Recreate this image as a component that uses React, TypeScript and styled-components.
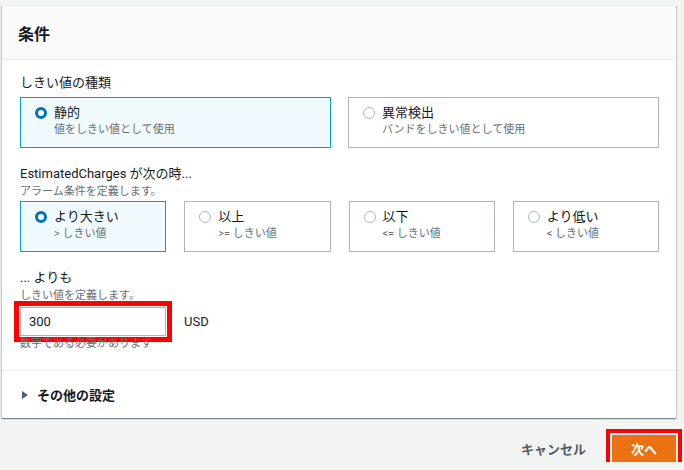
import React, { useState } from "react";
import styled, { createGlobalStyle } from "styled-components";

const GlobalStyle = createGlobalStyle`
  body {
    margin: 0;
    background: #f2f3f3;
    font-family: Roboto, "Noto Sans CJK JP", sans-serif;
    color: #16191f;
  }
  * { box-sizing: border-box; }
`;

const Page = styled.div`
  padding: 5px 8px 0 2px;
`;

const Card = styled.section`
  background: #ffffff;
  border-top: 1px solid #eaeded;
  box-shadow: 0 1px 1px 0 rgba(0, 28, 36, 0.3), 1px 1px 1px 0 rgba(0, 28, 36, 0.15),
    -1px 1px 1px 0 rgba(0, 28, 36, 0.15);
`;

const CardHeader = styled.header`
  height: 54px;
  display: flex;
  align-items: center;
  padding: 0 16px;
  background: #fafafa;
  border-bottom: 1px solid #eaeded;
`;

const Heading = styled.h2`
  margin: 0;
  font-size: 16px;
  font-weight: 700;
`;

const CardBody = styled.div`
  padding: 12px 17px 19px 18px;
  display: flex;
  flex-direction: column;
  gap: 15px;
`;

const Field = styled.div`
  display: flex;
  flex-direction: column;
`;

const Label = styled.div`
  font-size: 13px;
  line-height: 22px;
`;

const Description = styled.div`
  font-size: 11px;
  line-height: 13px;
  color: #687078;
`;

const TileGrid = styled.div<{ $cols: number }>`
  margin-top: 3px;
  display: grid;
  grid-template-columns: repeat(${(p) => p.$cols}, 1fr);
  gap: ${(p) => (p.$cols > 2 ? 18 : 17)}px;
`;

const Tile = styled.label<{ $selected: boolean }>`
  display: flex;
  align-items: flex-start;
  gap: 7px;
  height: 51px;
  padding: 6px 10px 10px 14px;
  border: 1px solid ${(p) => (p.$selected ? "#00a1c9" : "#aab7b8")};
  background: ${(p) => (p.$selected ? "#f1faff" : "#ffffff")};
  cursor: pointer;
`;

const Radio = styled.span<{ $checked: boolean }>`
  flex: none;
  width: 12px;
  height: 12px;
  margin-top: 3px;
  border-radius: 50%;
  background: #ffffff;
  border: ${(p) => (p.$checked ? "3.5px solid #0073bb" : "1px solid #aab7b8")};
`;

const TileText = styled.div`
  display: flex;
  flex-direction: column;
`;

const TileTitle = styled.span`
  font-size: 13px;
  line-height: 18px;
`;

const TileSub = styled.span`
  font-size: 11px;
  line-height: 16px;
  color: #687078;
`;

const InputRow = styled.div`
  margin-top: 5px;
  display: flex;
  align-items: center;
  gap: 18px;
`;

const NumberInput = styled.input`
  width: 146px;
  height: 29px;
  padding: 0 8px;
  border: 1px solid #aab7b8;
  font-family: Roboto, sans-serif;
  font-size: 13px;
  color: #16191f;
  outline: 5px solid #f00;
  outline-offset: 1px;
`;

const Unit = styled.span`
  font-size: 13px;
`;

const Hint = styled.div`
  margin-top: 1px;
  font-size: 11px;
  line-height: 14px;
  color: #687078;
`;

const Expander = styled.div`
  border-top: 1px solid #eaeded;
  height: 48px;
  display: flex;
  align-items: center;
  gap: 9px;
  padding-left: 20px;
  font-size: 13px;
  font-weight: 700;
  cursor: pointer;
`;

const Caret = styled.span`
  width: 0;
  height: 0;
  border-top: 4px solid transparent;
  border-bottom: 4px solid transparent;
  border-left: 6px solid #545b64;
`;

const Footer = styled.footer`
  display: flex;
  justify-content: flex-end;
  align-items: center;
  padding-top: 17px;
`;

const LinkButton = styled.button`
  background: none;
  border: none;
  padding: 0 8px;
  margin-right: 18px;
  font-family: inherit;
  font-size: 13px;
  font-weight: 700;
  color: #545b64;
  height: 27px;
`;

const PrimaryButton = styled.button`
  background: #ec7211;
  border: 1px solid #ec7211;
  color: #ffffff;
  font-family: inherit;
  font-size: 13px;
  font-weight: 700;
  height: 27px;
  padding: 0 18px;
  outline: 4px solid #f00;
  outline-offset: 2px;
`;

type Option = { id: string; title: string; sub: string };

const thresholdTypes: Option[] = [
  { id: "static", title: "静的", sub: "値をしきい値として使用" },
  { id: "anomaly", title: "異常検出", sub: "バンドをしきい値として使用" },
];

const comparisons: Option[] = [
  { id: "gt", title: "より大きい", sub: "> しきい値" },
  { id: "gte", title: "以上", sub: ">= しきい値" },
  { id: "lte", title: "以下", sub: "<= しきい値" },
  { id: "lt", title: "より低い", sub: "< しきい値" },
];

const TileGroup = ({
  options,
  value,
  onChange,
}: {
  options: Option[];
  value: string;
  onChange: (v: string) => void;
}) => (
  <TileGrid $cols={options.length}>
    {options.map((o) => (
      <Tile key={o.id} $selected={o.id === value} onClick={() => onChange(o.id)}>
        <Radio $checked={o.id === value} />
        <TileText>
          <TileTitle>{o.title}</TileTitle>
          <TileSub>{o.sub}</TileSub>
        </TileText>
      </Tile>
    ))}
  </TileGrid>
);

const App = () => {
  const [type, setType] = useState("static");
  const [cmp, setCmp] = useState("gt");
  const [value, setValue] = useState("300");

  return (
    <Page>
      <GlobalStyle />
      <Card>
        <CardHeader>
          <Heading>条件</Heading>
        </CardHeader>
        <CardBody>
          <Field>
            <Label>しきい値の種類</Label>
            <TileGroup options={thresholdTypes} value={type} onChange={setType} />
          </Field>
          <Field>
            <Label>EstimatedCharges が次の時...</Label>
            <Description>アラーム条件を定義します。</Description>
            <TileGroup options={comparisons} value={cmp} onChange={setCmp} />
          </Field>
          <Field>
            <Label>... よりも</Label>
            <Description>しきい値を定義します。</Description>
            <InputRow>
              <NumberInput value={value} onChange={(e) => setValue(e.target.value)} />
              <Unit>USD</Unit>
            </InputRow>
            <Hint>数字である必要があります</Hint>
          </Field>
        </CardBody>
        <Expander>
          <Caret />
          その他の設定
        </Expander>
      </Card>
      <Footer>
        <LinkButton>キャンセル</LinkButton>
        <PrimaryButton>次へ</PrimaryButton>
      </Footer>
    </Page>
  );
};

export default App;
